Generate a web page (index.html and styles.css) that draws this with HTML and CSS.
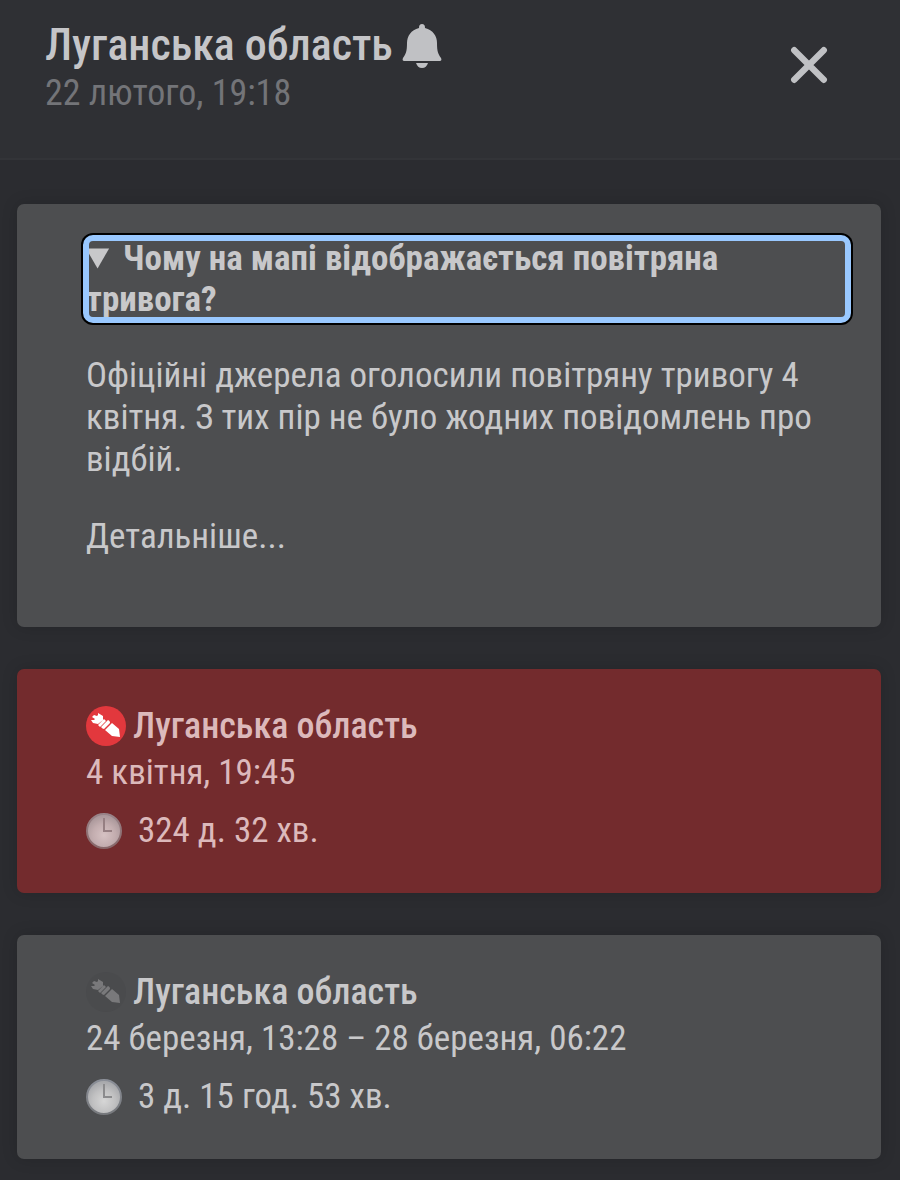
FILE: index.html
```
<!DOCTYPE html>
<html lang="uk">
<head>
  <meta charset="UTF-8" />
  <title>Луганська область</title>
  <meta name="viewport" content="width=device-width, initial-scale=1.0" />
  <link rel="stylesheet" href="styles.css">
</head>
<body>
  <!-- shared icons -->
  <svg class="sprite" aria-hidden="true">
    <defs>
      <radialGradient id="clockFace" cx="50%" cy="62%" r="55%">
        <stop offset="0" stop-color="#d6d6d6" />
        <stop offset="0.6" stop-color="#c0c0c1" />
        <stop offset="1" stop-color="#a9aaad" />
      </radialGradient>
      <linearGradient id="clockRim" x1="0" y1="0" x2="0" y2="1">
        <stop offset="0" stop-color="#8b8f98" />
        <stop offset="1" stop-color="#77797d" />
      </linearGradient>
      <radialGradient id="clockFaceRed" cx="50%" cy="62%" r="55%">
        <stop offset="0" stop-color="#d6c2c3" />
        <stop offset="0.6" stop-color="#c3adaf" />
        <stop offset="1" stop-color="#ac999c" />
      </radialGradient>
      <linearGradient id="clockRimRed" x1="0" y1="0" x2="0" y2="1">
        <stop offset="0" stop-color="#998489" />
        <stop offset="1" stop-color="#876769" />
      </linearGradient>
      <symbol id="rocket" viewBox="0 0 40 40">
        <circle cx="20" cy="20" r="20" fill="var(--rocket-bg)" />
        <path fill="var(--rocket-body)" d="M12 7l5 3v4l-5 4-5-1-2-3 3 0 1-1-3-2 2-2 3 1 1-1zM18 13l2 2-6 6-2-2zM22 14c2 1 2 2 2 3l-6 6c-1 0-2-1-3-2zM26 17l7 6 1 8-8-1-7-6z" />
      </symbol>
      <symbol id="clock" viewBox="0 0 36 36">
        <circle cx="18" cy="18" r="17" fill="var(--clock-face)" stroke="var(--clock-rim)" stroke-width="2" />
        <path d="M18 5v13h8" fill="none" stroke="var(--clock-hand)" stroke-width="2" />
      </symbol>
    </defs>
  </svg>

  <header class="header">
    <div class="header-text">
      <h1 class="title">Луганська область
        <svg class="bell" viewBox="0 0 40 46" aria-hidden="true">
          <path d="M20 1c2 0 3 1 3 4 8 2 12 8 12 15 0 8 1 11 4 15 1 2 0 3-1 3H2c-1 0-2-1-1-3 3-4 4-7 4-15C5 13 9 7 17 5c0-3 1-4 3-4z" />
          <path d="M14 40h12c-1 3-3 5-6 5s-5-2-6-5z" />
        </svg>
      </h1>
      <p class="date">22 лютого, 19:18</p>
    </div>
    <button class="close-btn" type="button" aria-label="Закрити">
      <svg viewBox="0 0 36 36" aria-hidden="true"><path d="M4 4l28 28M32 4L4 32" /></svg>
    </button>
  </header>

  <main class="cards">
    <section class="card">
      <details class="info" open>
        <summary class="question">Чому на мапі відображається повітряна тривога?</summary>
        <p>Офіційні джерела оголосили повітряну тривогу 4 квітня. З тих пір не було жодних повідомлень про відбій.</p>
        <p><a href="#" class="more">Детальніше...</a></p>
      </details>
    </section>

    <section class="card card-active">
      <h2 class="region"><svg class="rocket" aria-hidden="true"><use href="#rocket" /></svg>Луганська область</h2>
      <p class="period">4 квітня, 19:45</p>
      <p class="duration"><svg class="clock" aria-hidden="true"><use href="#clock" /></svg>324 д. 32 хв.</p>
    </section>

    <section class="card">
      <h2 class="region"><svg class="rocket" aria-hidden="true"><use href="#rocket" /></svg>Луганська область</h2>
      <p class="period">24 березня, 13:28 – 28 березня, 06:22</p>
      <p class="duration"><svg class="clock" aria-hidden="true"><use href="#clock" /></svg>3 д. 15 год. 53 хв.</p>
    </section>
  </main>
</body>
</html>
```
FILE: styles.css
```
* {
  box-sizing: border-box;
}

body {
  margin: 0;
  font-family: 'Roboto Condensed', Roboto, sans-serif;
  font-size: 35px;
  line-height: 42px;
  background: #2b2c30;
  color: #c8c8ca;
}

h1, h2, p {
  margin: 0;
}

.sprite {
  position: absolute;
  width: 0;
  height: 0;
}

.header {
  display: flex;
  justify-content: space-between;
  align-items: flex-start;
  padding: 20px 72px 43px 45px;
  background: #2f3034;
  border-bottom: 2px solid #333438;
}

.title {
  display: flex;
  align-items: center;
  gap: 9px;
  font-size: 44px;
  line-height: 51px;
  font-weight: 500;
  color: #c5c5c8;
}

.bell {
  width: 40px;
  height: 46px;
  fill: #c0c1c4;
}

.date {
  font-size: 36px;
  line-height: 44px;
  color: #737478;
}

.close-btn {
  margin-top: 26px;
  padding: 0;
  width: 38px;
  height: 38px;
  border: none;
  background: none;
  cursor: pointer;
}

.close-btn svg {
  display: block;
  width: 38px;
  height: 38px;
  fill: none;
  stroke: #c0c1c4;
  stroke-width: 6;
  stroke-linecap: round;
}

.cards {
  display: flex;
  flex-direction: column;
  gap: 42px;
  padding: 44px 19px 22px 17px;
}

.card {
  --rocket-bg: #4a4b4d;
  --rocket-body: #79797b;
  --clock-face: url(#clockFace);
  --clock-rim: url(#clockRim);
  --clock-hand: #8b8b8d;
  padding: 34px 33px 34px 69px;
  background: #4d4e50;
  border-radius: 7px;
  box-shadow: 0 0 16px rgba(0, 0, 0, 0.15);
}

.card-active {
  --rocket-bg: #e2383d;
  --rocket-body: #fff;
  --clock-face: url(#clockFaceRed);
  --clock-rim: url(#clockRimRed);
  --clock-hand: #967f82;
  background: #732b2d;
  color: #dcb9bb;
}

.question {
  font-weight: 700;
  line-height: 41px;
  border-radius: 7px;
  outline: 6px solid #99c8ff;
  outline-offset: -3px;
  box-shadow: 0 0 0 5px #000;
}

.info p {
  margin: 35px 0;
}

.more {
  color: inherit;
  text-decoration: none;
}

.region {
  display: flex;
  align-items: center;
  gap: 7px;
  margin-bottom: 3px;
  font-size: 36px;
  line-height: 46px;
  font-weight: 500;
}

.rocket {
  width: 40px;
  height: 40px;
}

.duration {
  display: flex;
  align-items: center;
  gap: 16px;
  margin: 16px 0 7px;
}

.clock {
  width: 36px;
  height: 36px;
}
```
